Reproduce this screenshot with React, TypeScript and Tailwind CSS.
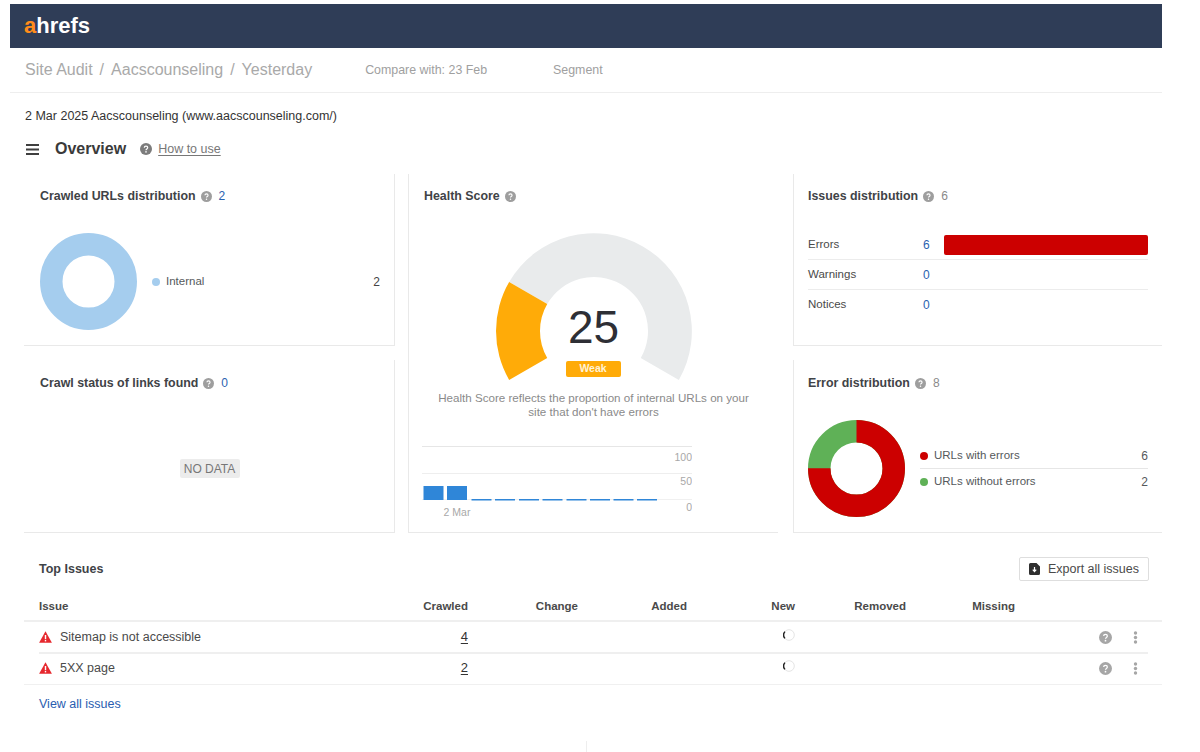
// Ahrefs Site Audit overview
const CHART_BARS = [1.5, 25];
const CHART_DASHES = [49.5, 73, 97, 120.5, 144.5, 168, 191.5, 215];

const HelpIcon = ({ size = 12, color = '#9e9e9e' }: { size?: number; color?: string }) => (
  <svg width={size} height={size} viewBox="0 0 12 12" className="shrink-0">
    <circle cx="6" cy="6" r="6" fill={color} />
    <path d="M4.3 4.7c0-1 .8-1.6 1.7-1.6s1.7.6 1.7 1.5c0 1.4-1.7 1.3-1.7 2.6" fill="none" stroke="#fff" strokeWidth="1.2" />
    <circle cx="6" cy="8.9" r=".8" fill="#fff" />
  </svg>
);

const CardTitle = ({ title, count, link }: { title: string; count?: number; link?: boolean }) => (
  <div className="flex h-4 items-center">
    <span className="text-[12.4px] font-bold text-[#3f4347]">{title}</span>
    <span className="ml-[5px]"><HelpIcon size={11} /></span>
    {count !== undefined && (
      <span className={`ml-[7px] text-xs ${link ? 'text-[#2a62b0]' : 'text-[#8a8a8a]'}`}>{count}</span>
    )}
  </div>
);

const InternalDonut = () => (
  <svg width="97" height="97" viewBox="0 0 97 97" className="shrink-0">
    <circle cx="48.5" cy="48.5" r="37.25" fill="none" stroke="#a5cdee" strokeWidth="22.5" />
  </svg>
);

const ErrorDonut = () => (
  <svg width="97" height="97" viewBox="0 0 97 97" className="shrink-0">
    <circle cx="48.5" cy="48.5" r="37.25" fill="none" stroke="#5fb157" strokeWidth="22.5" />
    <circle
      cx="48.5"
      cy="48.5"
      r="37.25"
      fill="none"
      stroke="#cc0000"
      strokeWidth="22.5"
      strokeDasharray="175.5 234.1"
      transform="rotate(-90 48.5 48.5)"
    />
  </svg>
);

const Gauge = () => (
  <div className="relative mx-auto mt-[29px] h-[148px] w-[196px]">
    <svg width="196" height="148" viewBox="0 0 196 148">
      <path d="M13.13 49A98 98 0 0 1 182.87 147L144.77 125A54 54 0 0 0 51.23 71Z" fill="#e9ebec" />
      <path d="M13.13 147A98 98 0 0 1 13.13 49L51.23 71A54 54 0 0 0 51.23 125Z" fill="#ffab08" />
    </svg>
    <div className="absolute left-0 right-0 top-[68px] text-center text-[46px] leading-[52px] text-[#2e2f35]">25</div>
    <div className="absolute left-[70px] top-[128px] flex h-4 w-[55px] items-center justify-center rounded-[2px] bg-[#ffab08] text-[10.5px] font-bold text-[#fff3d6]">
      Weak
    </div>
  </div>
);

const HealthChart = () => (
  <svg width="270" height="80" viewBox="0 0 270 80" className="ml-[13px] mt-[21px]">
    <line x1="0" x2="270" y1="6.5" y2="6.5" stroke="#e6e6e6" />
    <line x1="0" x2="270" y1="33.5" y2="33.5" stroke="#eeeeee" />
    <line x1="0" x2="270" y1="59.5" y2="59.5" stroke="#f0f0f0" />
    {CHART_BARS.map((x) => (
      <rect key={x} x={x} y="46" width="20" height="14" fill="#2f86d8" />
    ))}
    {CHART_DASHES.map((x) => (
      <rect key={x} x={x} y="59" width="20" height="1.5" fill="#2f86d8" />
    ))}
    <g fontSize="10.5" fill="#a8a8a8" textAnchor="end">
      <text x="270" y="21">100</text>
      <text x="270" y="45">50</text>
      <text x="270" y="71">0</text>
    </g>
    <text x="35" y="76" fontSize="10.5" fill="#a8a8a8" textAnchor="middle">2 Mar</text>
  </svg>
);

const IssueRow = ({ label, value, bar, border }: { label: string; value: number; bar?: boolean; border?: boolean }) => (
  <div className={`flex h-[30px] items-center text-[11.5px] ${border ? 'border-b border-[#ececec]' : ''}`}>
    <span className="w-[115px] text-[#4a4a4a]">{label}</span>
    <span className="w-[21px] text-xs text-[#2a62b0]">{value}</span>
    {bar && <span className="h-5 flex-1 rounded-[2px] bg-[#cc0000]" />}
  </div>
);

const LegendRow = ({ dot, label, value, border }: { dot: string; label: string; value: number; border?: boolean }) => (
  <div className={`flex h-[26px] items-center text-[11.5px] text-[#55595c] ${border ? 'border-b border-[#e6e6e6]' : 'pb-px'}`}>
    <span className={`mr-[6px] h-[8px] w-[8px] rounded-full ${dot}`} />
    <span className="flex-1">{label}</span>
    <span className="text-xs">{value}</span>
  </div>
);

const Spinner = () => (
  <svg width="12" height="12" viewBox="0 0 12 12" className="ml-auto -mt-[4px]">
    <circle cx="6" cy="6" r="5.3" fill="none" stroke="#e4e4e4" strokeWidth="1" />
    <path d="M1.94 2.6A5.3 5.3 0 0 0 1.94 9.4" fill="none" stroke="#222" strokeWidth="1.4" />
  </svg>
);

const WarningIcon = () => (
  <svg width="13" height="12" viewBox="0 0 13 12" className="shrink-0">
    <path d="M6.5.3 12.9 11.7H.1Z" fill="#e6282e" />
    <rect x="5.8" y="4" width="1.4" height="4.2" fill="#fff" />
    <rect x="5.8" y="9" width="1.4" height="1.4" fill="#fff" />
  </svg>
);

const KebabIcon = () => (
  <svg width="5" height="13" viewBox="0 0 5 13">
    <circle cx="2.5" cy="2" r="1.7" fill="#a6a6a6" />
    <circle cx="2.5" cy="6.5" r="1.7" fill="#a6a6a6" />
    <circle cx="2.5" cy="11" r="1.7" fill="#a6a6a6" />
  </svg>
);

const TableGrid = 'grid grid-cols-[384px_60px_110px_109px_108px_111px_109px_1fr] items-center';

const TableRow = ({ issue, crawled, rowClass }: { issue: string; crawled: number; rowClass: string }) => (
  <div className={`${TableGrid} text-xs text-[#4a4a4a] ${rowClass}`}>
    <div className="flex items-center">
      <span className="ml-[15px]"><WarningIcon /></span>
      <span className="ml-[8px] text-[12.5px]">{issue}</span>
    </div>
    <div className="text-right text-[13px] text-[#333] underline underline-offset-2">{crawled}</div>
    <div />
    <div />
    <div className="flex"><Spinner /></div>
    <div />
    <div />
    <div className="flex items-center justify-end gap-[21px] pr-[24px]">
      <HelpIcon size={13} color="#a6a6a6" />
      <KebabIcon />
    </div>
  </div>
);

export default function App() {
  return (
    <div className="h-[752px] w-[1200px] overflow-hidden bg-white pt-[4px] font-['Liberation_Sans',Arial,sans-serif]">
      <div className="ml-[10px] flex h-[44px] w-[1152px] items-center bg-[#2f3d57] pl-[14px]">
        <span className="text-[22px] font-bold leading-none text-white">
          <span className="text-[#ff8c1a]">a</span>hrefs
        </span>
      </div>

      <div className="ml-[10px] flex h-[45px] w-[1152px] items-center border-b border-[#eeeeee] pl-[15px]">
        <span className="text-[16px] text-[#a9a9a9]">
          Site Audit<span className="mx-[7px]">/</span>Aacscounseling<span className="mx-[7px]">/</span>Yesterday
        </span>
        <span className="ml-[53px] text-[12.4px] text-[#a0a0a0]">Compare with: 23 Feb</span>
        <span className="ml-[66px] text-[12.4px] text-[#a0a0a0]">Segment</span>
      </div>

      <div className="ml-[25px] mt-[15px] text-[12.5px] leading-4 text-[#333]">
        2 Mar 2025 Aacscounseling (www.aacscounseling.com/)
      </div>

      <div className="ml-[26px] mt-[15px] flex h-5 items-center">
        <svg width="13" height="11" viewBox="0 0 13 11">
          <path d="M0 1h13M0 5.5h13M0 10h13" stroke="#3f3f3f" strokeWidth="1.8" />
        </svg>
        <span className="ml-[16px] text-[16px] font-bold text-[#3a3a3a]">Overview</span>
        <span className="ml-[14px]"><HelpIcon size={12} color="#7c7c7c" /></span>
        <span className="ml-[6px] text-[12.5px] text-[#777] underline underline-offset-2">How to use</span>
      </div>

      <div className="ml-[24px] mt-[15px] flex h-[359px]">
        <div className="flex w-[371px] flex-col gap-[14px]">
          <section className="h-[172px] border-b border-r border-[#e9e9e9] pl-[16px] pr-[14px] pt-[14px]">
            <CardTitle title="Crawled URLs distribution" count={2} link />
            <div className="mt-[29px] flex items-center">
              <InternalDonut />
              <span className="ml-[15px] h-[8px] w-[8px] rounded-full bg-[#a5cdee]" />
              <span className="ml-[6px] flex-1 text-[11.5px] text-[#55595c]">Internal</span>
              <span className="text-xs text-[#444]">2</span>
            </div>
          </section>
          <section className="flex h-[173px] flex-col border-b border-r border-[#e9e9e9] pl-[16px] pr-[14px] pt-[15px]">
            <CardTitle title="Crawl status of links found" count={0} link />
            <div className="flex flex-1 items-center justify-center pr-[1px] pt-[14px]">
              <span className="flex h-[19px] w-[60px] items-center justify-center rounded-[2px] bg-[#ececec] text-xs text-[#777]">
                NO DATA
              </span>
            </div>
          </section>
        </div>

        <section className="ml-[13px] h-[359px] w-[370px] border-b border-l border-[#e9e9e9] pt-[14px]">
          <div className="pl-[15px]"><CardTitle title="Health Score" /></div>
          <Gauge />
          <p className="mt-[10px] text-center text-[11.6px] leading-[14px] text-[#8a8a8a]">
            Health Score reflects the proportion of internal URLs on your
            <br />
            site that don't have errors
          </p>
          <HealthChart />
        </section>

        <div className="ml-[15px] flex w-[369px] flex-col gap-[14px]">
          <section className="h-[172px] border-b border-l border-[#e9e9e9] pl-[14px] pr-[14px] pt-[14px]">
            <CardTitle title="Issues distribution" count={6} />
            <div className="mt-[26px]">
              <IssueRow label="Errors" value={6} bar border />
              <IssueRow label="Warnings" value={0} border />
              <IssueRow label="Notices" value={0} />
            </div>
          </section>
          <section className="h-[173px] border-b border-l border-[#e9e9e9] pl-[14px] pr-[14px] pt-[15px]">
            <CardTitle title="Error distribution" count={8} />
            <div className="mt-[29px] flex items-center">
              <ErrorDonut />
              <div className="ml-[15px] mt-px flex-1">
                <LegendRow dot="bg-[#cc0000]" label="URLs with errors" value={6} border />
                <LegendRow dot="bg-[#5fb157]" label="URLs without errors" value={2} />
              </div>
            </div>
          </section>
        </div>
      </div>

      <div className="ml-[24px] w-[1138px]">
        <div className="mt-[24px] flex h-[24px] items-center justify-between pl-[15px] pr-[13px]">
          <span className="text-[12.5px] font-bold text-[#3f4347]">Top Issues</span>
          <button className="flex h-[24px] w-[130px] items-center justify-center gap-[8px] rounded-[2px] border border-[#dedede] bg-white text-[12.5px] text-[#4a4a4a]">
            <svg width="11" height="12" viewBox="0 0 11 12">
              <path d="M1.500 0H7.500L11 3.500V10.500A1.500 1.500 0 0 1 9.500 12H1.500A1.500 1.500 0 0 1 0 10.500V1.500A1.500 1.500 0 0 1 1.500 0Z" fill="#2f2f2f" />
              <path d="M5.500 4V8M3.800 6.600 5.500 8.600 7.200 6.600" fill="none" stroke="#fff" strokeWidth="1.200" />
            </svg>
            Export all issues
          </button>
        </div>

        <div className={`${TableGrid} mt-[11px] h-[30px] border-b-2 border-[#efefef] pt-px text-[11.5px] font-bold text-[#4a4a4a]`}>
          <div className="pl-[15px]">Issue</div>
          <div className="text-right">Crawled</div>
          <div className="text-right">Change</div>
          <div className="text-right">Added</div>
          <div className="text-right">New</div>
          <div className="text-right">Removed</div>
          <div className="text-right">Missing</div>
          <div />
        </div>
        <TableRow issue="Sitemap is not accessible" crawled={4} rowClass="h-[30px]" />
        <div className="ml-[15px] mr-[14px] h-[2px] bg-[#efefef]" />
        <TableRow issue="5XX page" crawled={2} rowClass="h-[31px] border-b border-[#f0f0f0] pb-[2px]" />
        <div className="mt-[11px] pl-[15px] text-[12.5px] leading-4 text-[#2a5db0]">View all issues</div>
      </div>
      <div className="ml-[586px] mt-[29px] h-4 w-px bg-[#eeeeee]" />
    </div>
  );
}
